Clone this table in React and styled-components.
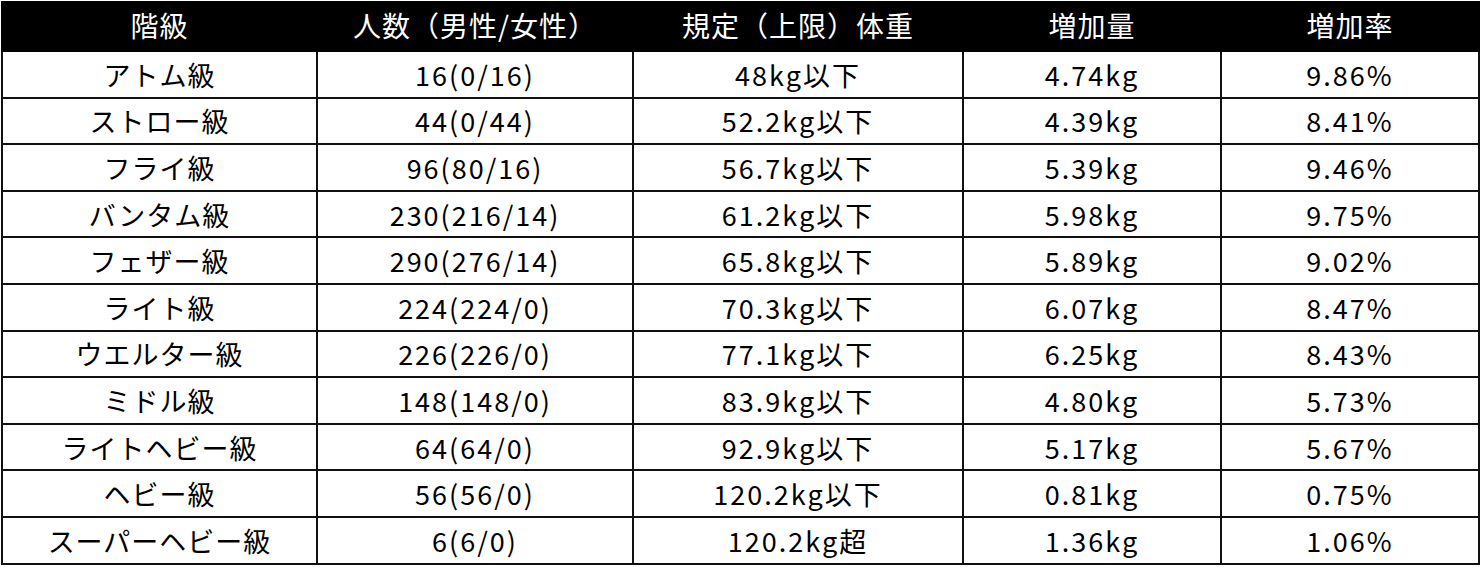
import styled, { createGlobalStyle } from 'styled-components';

const GlobalStyle = createGlobalStyle`
	html, body {
		margin: 0;
		padding: 0;
		background: #fff;
	}
	body {
		font-family: 'Noto Sans CJK JP', 'Noto Sans', sans-serif;
	}
`;

const Table = styled.table`
	width: 1477px;
	margin: 1px 0 0 1px;
	border-collapse: collapse;
	table-layout: fixed;
	color: #000;
	font-family: 'Noto Sans CJK JP', 'Noto Sans', sans-serif;
`;

const Col = styled.col`
	width: ${(props) => props.w}px;
`;

const HeadCell = styled.th`
	height: 44px;
	padding: 0 0 3px;
	background: #000;
	color: #fff;
	font-size: 28px;
	font-weight: 400;
	text-align: center;
	border: 2px solid #000;
	line-height: 1;
	letter-spacing: 1px;
`;

const Cell = styled.td`
	height: 44.6px;
	padding: 0;
	font-size: 27px;
	font-weight: 400;
	text-align: center;
	border: 2px solid #111;
	line-height: 1;
	letter-spacing: ${(props) => (props.num ? '2px' : '1px')};
`;

const columns = [
	{ label: '階級', w: 315 },
	{ label: '人数（男性/女性）', w: 316 },
	{ label: '規定（上限）体重', w: 330 },
	{ label: '増加量', w: 258 },
	{ label: '増加率', w: 258 },
];

const rows = [
	['アトム級', '16(0/16)', '48kg以下', '4.74kg', '9.86%'],
	['ストロー級', '44(0/44)', '52.2kg以下', '4.39kg', '8.41%'],
	['フライ級', '96(80/16)', '56.7kg以下', '5.39kg', '9.46%'],
	['バンタム級', '230(216/14)', '61.2kg以下', '5.98kg', '9.75%'],
	['フェザー級', '290(276/14)', '65.8kg以下', '5.89kg', '9.02%'],
	['ライト級', '224(224/0)', '70.3kg以下', '6.07kg', '8.47%'],
	['ウエルター級', '226(226/0)', '77.1kg以下', '6.25kg', '8.43%'],
	['ミドル級', '148(148/0)', '83.9kg以下', '4.80kg', '5.73%'],
	['ライトヘビー級', '64(64/0)', '92.9kg以下', '5.17kg', '5.67%'],
	['ヘビー級', '56(56/0)', '120.2kg以下', '0.81kg', '0.75%'],
	['スーパーヘビー級', '6(6/0)', '120.2kg超', '1.36kg', '1.06%'],
];

function App() {
	return (
		<>
			<GlobalStyle />
			<Table>
				<colgroup>
					{columns.map((c) => (
						<Col key={c.label} w={c.w} />
					))}
				</colgroup>
				<thead>
					<tr>
						{columns.map((c) => (
							<HeadCell key={c.label}>{c.label}</HeadCell>
						))}
					</tr>
				</thead>
				<tbody>
					{rows.map((r) => (
						<tr key={r[0]}>
							{r.map((v, i) => (
								<Cell key={i} num={i > 0}>
									{v}
								</Cell>
							))}
						</tr>
					))}
				</tbody>
			</Table>
		</>
	);
}

export default App;
